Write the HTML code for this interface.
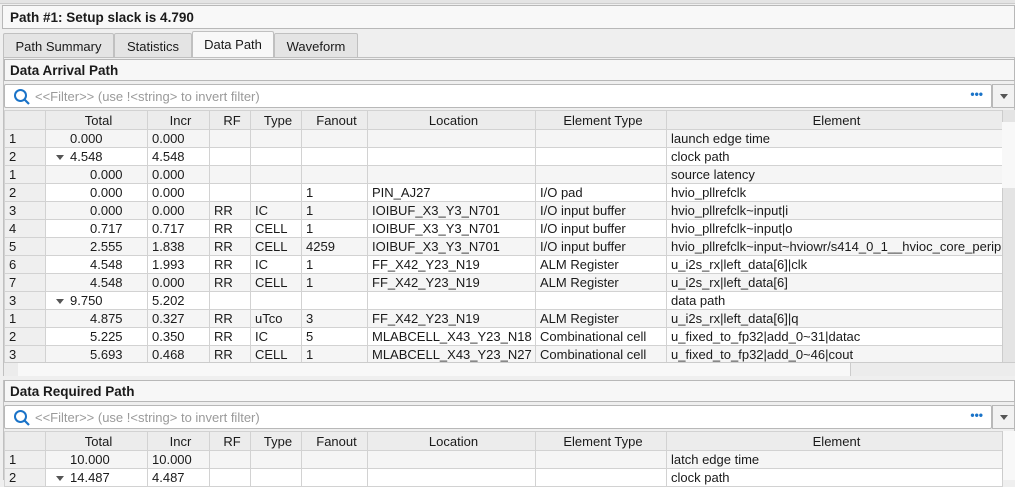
<!DOCTYPE html>
<html><head><meta charset="utf-8"><style>
*{box-sizing:border-box;margin:0;padding:0}
body{width:1015px;height:480px;overflow:hidden;background:#efefef;font-family:"Liberation Sans",sans-serif;font-size:13px;color:#1a1a1a;position:relative}
.abs{position:absolute}
.box{position:absolute;border:1px solid #b8b8b8;background:#f7f7f7}
.title{font-weight:bold;font-size:13.5px}
.tab{position:absolute;top:33px;height:24px;border:1px solid #c0c0c0;border-bottom:none;background:#e4e4e4;padding:5px 0 0;text-align:center;border-radius:2px 2px 0 0}
.filter{position:absolute;left:4px;width:988px;height:24px;border:1px solid #b8b8b8;background:#fff;border-radius:2px}
.filter span{position:absolute;left:30px;top:4px;color:#9a9a9a}
.dd{position:absolute;left:992px;width:23px;height:24px;border:1px solid #b8b8b8;background:#f2f2f2}
table{position:absolute;left:4px;border-collapse:collapse;table-layout:fixed;background:#fff}
td,th{height:18px;border:1px solid #d2d2d2;padding:0 0 0 4px;white-space:nowrap;overflow:hidden;font-weight:normal;line-height:17px}
th{background:#ececec;text-align:center;height:19px}
tr:nth-child(even) td{background:#f5f5f5}
td.n{background:#efefef!important}
.r{text-align:right;padding-right:4px}
.tri{display:inline-block;width:0;height:0;border-left:4px solid transparent;border-right:4px solid transparent;border-top:5px solid #555;margin:0 6px 1px 6px}
</style></head><body>
<div class="abs" style="left:0;top:0;width:1015px;height:4px;background:#e4e4e4;border-bottom:1px solid #ccc"></div>
<div class="box" style="left:2px;top:5px;width:1013px;height:24px;background:#f8f8f8"><span class="title abs" style="left:7px;top:4px">Path #1: Setup slack is 4.790</span></div>
<div class="tab" style="left:3px;width:111px">Path Summary</div>
<div class="tab" style="left:114px;width:78px">Statistics</div>
<div class="tab" style="left:192px;width:82px;top:31px;height:27px;background:#f8f8f8">Data Path</div>
<div class="tab" style="left:274px;width:84px">Waveform</div>
<div class="abs" style="left:3px;top:57px;width:1012px;height:423px;border:1px solid #c0c0c0;background:#efefef"></div>
<div class="box" style="left:4px;top:59px;width:1011px;height:22px"><span class="title abs" style="left:5px;top:3px">Data Arrival Path</span></div>
<div class="filter" style="top:84px"><svg class="abs" style="left:8px;top:3px" width="18" height="18"><circle cx="7.5" cy="7.5" r="5.5" fill="none" stroke="#1a73c8" stroke-width="2"/><line x1="11.5" y1="11.5" x2="16" y2="16" stroke="#1a73c8" stroke-width="2.2"/></svg><span>&lt;&lt;Filter&gt;&gt; (use !&lt;string&gt; to invert filter)</span><b class="abs" style="right:8px;top:2px;color:#1a73c8;font-size:12px;letter-spacing:0px">•••</b></div>
<div class="dd" style="top:84px"><span class="abs" style="left:7px;top:9px;border-left:4px solid transparent;border-right:4px solid transparent;border-top:5px solid #555"></span></div>
<table style="top:110px;width:998px">
<colgroup><col style="width:41px"><col style="width:102px"><col style="width:62px"><col style="width:41px"><col style="width:51px"><col style="width:66px"><col style="width:168px"><col style="width:131px"><col style="width:336px"></colgroup>
<tr><th></th><th>Total</th><th>Incr</th><th>RF</th><th>Type</th><th>Fanout</th><th>Location</th><th>Element Type</th><th>Element</th></tr>
<tr><td class="n">1</td><td style="padding-left:24px">0.000</td><td>0.000</td><td></td><td></td><td></td><td></td><td></td><td>launch edge time</td></tr>
<tr><td class="n">2</td><td><span class="tri"></span>4.548</td><td>4.548</td><td></td><td></td><td></td><td></td><td></td><td>clock path</td></tr>
<tr><td class="n">1</td><td style="padding-left:44px">0.000</td><td>0.000</td><td></td><td></td><td></td><td></td><td></td><td>source latency</td></tr>
<tr><td class="n">2</td><td style="padding-left:44px">0.000</td><td>0.000</td><td></td><td></td><td>1</td><td>PIN_AJ27</td><td>I/O pad</td><td>hvio_pllrefclk</td></tr>
<tr><td class="n">3</td><td style="padding-left:44px">0.000</td><td>0.000</td><td>RR</td><td>IC</td><td>1</td><td>IOIBUF_X3_Y3_N701</td><td>I/O input buffer</td><td>hvio_pllrefclk~input|i</td></tr>
<tr><td class="n">4</td><td style="padding-left:44px">0.717</td><td>0.717</td><td>RR</td><td>CELL</td><td>1</td><td>IOIBUF_X3_Y3_N701</td><td>I/O input buffer</td><td>hvio_pllrefclk~input|o</td></tr>
<tr><td class="n">5</td><td style="padding-left:44px">2.555</td><td>1.838</td><td>RR</td><td>CELL</td><td>4259</td><td>IOIBUF_X3_Y3_N701</td><td>I/O input buffer</td><td>hvio_pllrefclk~input~hviowr/s414_0_1__hvioc_core_periph</td></tr>
<tr><td class="n">6</td><td style="padding-left:44px">4.548</td><td>1.993</td><td>RR</td><td>IC</td><td>1</td><td>FF_X42_Y23_N19</td><td>ALM Register</td><td>u_i2s_rx|left_data[6]|clk</td></tr>
<tr><td class="n">7</td><td style="padding-left:44px">4.548</td><td>0.000</td><td>RR</td><td>CELL</td><td>1</td><td>FF_X42_Y23_N19</td><td>ALM Register</td><td>u_i2s_rx|left_data[6]</td></tr>
<tr><td class="n">3</td><td><span class="tri"></span>9.750</td><td>5.202</td><td></td><td></td><td></td><td></td><td></td><td>data path</td></tr>
<tr><td class="n">1</td><td style="padding-left:44px">4.875</td><td>0.327</td><td>RR</td><td>uTco</td><td>3</td><td>FF_X42_Y23_N19</td><td>ALM Register</td><td>u_i2s_rx|left_data[6]|q</td></tr>
<tr><td class="n">2</td><td style="padding-left:44px">5.225</td><td>0.350</td><td>RR</td><td>IC</td><td>5</td><td>MLABCELL_X43_Y23_N18</td><td>Combinational cell</td><td>u_fixed_to_fp32|add_0~31|datac</td></tr>
<tr><td class="n">3</td><td style="padding-left:44px">5.693</td><td>0.468</td><td>RR</td><td>CELL</td><td>1</td><td>MLABCELL_X43_Y23_N27</td><td>Combinational cell</td><td>u_fixed_to_fp32|add_0~46|cout</td></tr>
</table>
<div class="abs" style="left:4px;top:362px;width:1011px;height:14px;background:#ececec;border-top:1px solid #ccc"></div>
<div class="abs" style="left:18px;top:363px;width:833px;height:13px;background:#f8f8f8;border-right:1px solid #ccc"></div>
<div class="abs" style="left:1002px;top:110px;width:13px;height:252px;background:#e4e4e4;border-left:1px solid #ccc"></div>
<div class="abs" style="left:1002px;top:122px;width:13px;height:66px;background:#f8f8f8"></div>
<div class="abs" style="left:3px;top:376px;width:1012px;height:4px;background:#efefef"></div>
<div class="box" style="left:4px;top:380px;width:1011px;height:22px"><span class="title abs" style="left:5px;top:3px">Data Required Path</span></div>
<div class="filter" style="top:405px"><svg class="abs" style="left:8px;top:3px" width="18" height="18"><circle cx="7.5" cy="7.5" r="5.5" fill="none" stroke="#1a73c8" stroke-width="2"/><line x1="11.5" y1="11.5" x2="16" y2="16" stroke="#1a73c8" stroke-width="2.2"/></svg><span>&lt;&lt;Filter&gt;&gt; (use !&lt;string&gt; to invert filter)</span><b class="abs" style="right:8px;top:2px;color:#1a73c8;font-size:12px">•••</b></div>
<div class="dd" style="top:405px"><span class="abs" style="left:7px;top:9px;border-left:4px solid transparent;border-right:4px solid transparent;border-top:5px solid #555"></span></div>
<table style="top:431px;width:998px">
<colgroup><col style="width:41px"><col style="width:102px"><col style="width:62px"><col style="width:41px"><col style="width:51px"><col style="width:66px"><col style="width:168px"><col style="width:131px"><col style="width:336px"></colgroup>
<tr><th></th><th>Total</th><th>Incr</th><th>RF</th><th>Type</th><th>Fanout</th><th>Location</th><th>Element Type</th><th>Element</th></tr>
<tr><td class="n">1</td><td style="padding-left:24px">10.000</td><td>10.000</td><td></td><td></td><td></td><td></td><td></td><td>latch edge time</td></tr>
<tr><td class="n">2</td><td><span class="tri"></span>14.487</td><td>4.487</td><td></td><td></td><td></td><td></td><td></td><td>clock path</td></tr>
</table>
<div class="abs" style="left:1002px;top:431px;width:13px;height:49px;background:#f8f8f8;border-left:1px solid #ccc"></div>
</body></html>
